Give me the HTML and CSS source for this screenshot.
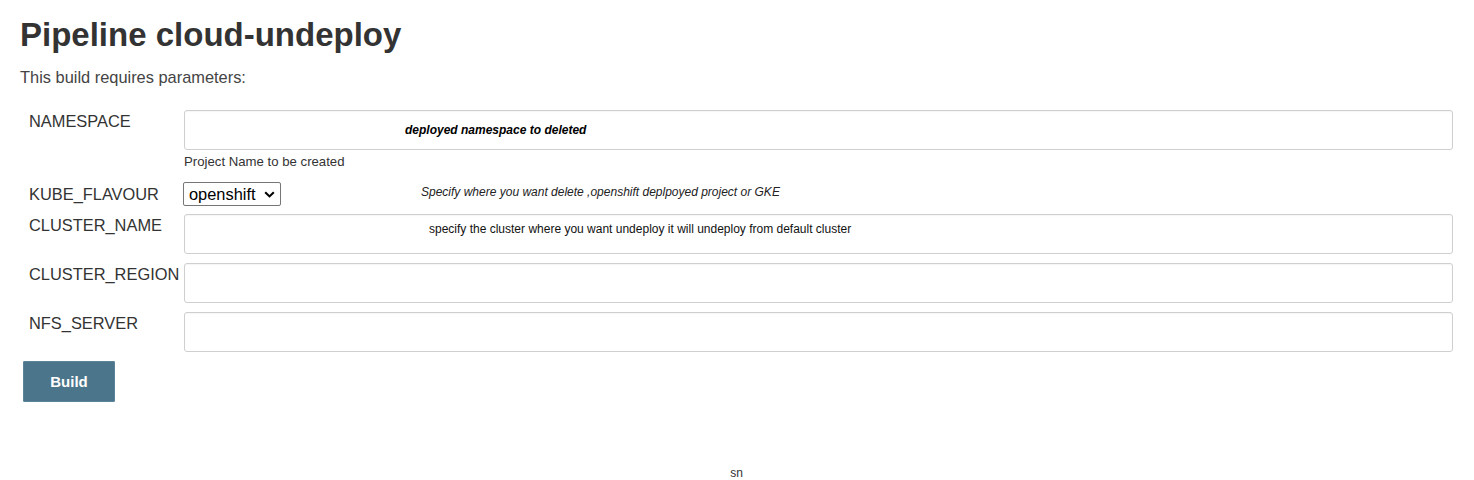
FILE: index.html
```html
<!DOCTYPE html>
<html lang="en">
<head>
<meta charset="utf-8">
<title>Pipeline cloud-undeploy</title>
<link rel="stylesheet" href="styles.css">
</head>
<body>
<div class="page">
  <h1 class="title">Pipeline cloud-undeploy</h1>
  <p class="intro">This build requires parameters:</p>
  <form class="params">
    <div class="row">
      <div class="label">NAMESPACE</div>
      <div class="field">
        <div class="input-wrap">
          <input class="text-input" type="text">
          <span class="overlay overlay-ns">deployed namespace to deleted</span>
        </div>
        <div class="desc">Project Name to be created</div>
      </div>
    </div>
    <div class="row row-kube">
      <div class="label label-kube">KUBE_FLAVOUR</div>
      <div class="field field-kube">
        <span class="select-wrap">
          <select class="select"><option>openshift</option><option>GKE</option></select>
          <svg class="chevron" width="11" height="7" viewBox="0 0 11 7" aria-hidden="true"><path d="M1.2 1.2 L5.5 5.4 L9.8 1.2" fill="none" stroke="#000" stroke-width="2.1"/></svg>
        </span>
        <span class="kube-desc">Specify where you want delete ,openshift deplpoyed project or GKE</span>
      </div>
    </div>
    <div class="row row-gap">
      <div class="label">CLUSTER_NAME</div>
      <div class="field">
        <div class="input-wrap">
          <input class="text-input" type="text">
          <span class="overlay overlay-cluster">specify the cluster where you want undeploy it will undeploy from default cluster</span>
        </div>
      </div>
    </div>
    <div class="row row-gap">
      <div class="label">CLUSTER_REGION</div>
      <div class="field">
        <div class="input-wrap"><input class="text-input" type="text"></div>
      </div>
    </div>
    <div class="row row-gap">
      <div class="label">NFS_SERVER</div>
      <div class="field">
        <div class="input-wrap"><input class="text-input" type="text"></div>
      </div>
    </div>
  </form>
  <div class="actions"><button class="build-btn" type="button">Build</button></div>
  <footer class="footer">sn</footer>
</div>
</body>
</html>
```
FILE: styles.css
```css
html, body {
  margin: 0;
  padding: 0;
  background: #fff;
}
body {
  font-family: "Liberation Sans", Arial, sans-serif;
  color: #333;
}
.page {
  padding: 15px 21px 0 20px;
}
.title {
  margin: 0;
  font-size: 33px;
  line-height: 40px;
  font-weight: bold;
  color: #333;
}
.intro {
  margin: 12px 0 0;
  font-size: 16.4px;
  line-height: 20px;
  color: #444;
}
.params {
  margin: 23px 0 0;
  padding-left: 9px;
  display: flex;
  flex-direction: column;
}
.row {
  display: grid;
  grid-template-columns: 155px 1fr;
  align-items: start;
}
.row-gap {
  margin-top: 9px;
}
.row-kube {
  margin-top: 12px;
  margin-bottom: -1px;
}
.label {
  font-size: 16.4px;
  line-height: 20px;
  padding-top: 1px;
  color: #333;
  white-space: nowrap;
}
.label-kube {
  padding-top: 2px;
}
.field {
  min-width: 0;
}
.input-wrap {
  position: relative;
}
.text-input {
  display: block;
  width: 100%;
  height: 40px;
  box-sizing: border-box;
  border: 1px solid #cfcfcf;
  border-radius: 3px;
  background: #fff;
  box-shadow: inset 0 1px 1px rgba(0, 0, 0, 0.04);
  padding: 0 8px;
  margin: 0;
  font: 16px "Liberation Sans", Arial, sans-serif;
}
.overlay {
  position: absolute;
  font-size: 12px;
  line-height: 14px;
  color: #000;
  white-space: nowrap;
  pointer-events: none;
}
.overlay-ns {
  left: 221px;
  top: 13px;
  font-weight: bold;
  font-style: italic;
}
.overlay-cluster {
  left: 245px;
  top: 8px;
  color: #111;
}
.desc {
  margin-top: 4px;
  font-size: 13.2px;
  line-height: 16px;
  color: #333;
}
.field-kube {
  display: flex;
  align-items: flex-start;
}
.select-wrap {
  position: relative;
  display: block;
  margin-left: -1px;
}
.select {
  display: block;
  width: 98px;
  height: 24px;
  box-sizing: border-box;
  margin: 0;
  padding: 0 0 0 5px;
  font: 16.4px "Liberation Sans", Arial, sans-serif;
  color: #000;
  background: #fff;
  border: 1px solid #767676;
  border-radius: 2px;
  -webkit-appearance: none;
  appearance: none;
}
.chevron {
  position: absolute;
  right: 6px;
  top: 9px;
  pointer-events: none;
}
.kube-desc {
  margin-left: 140px;
  margin-top: 3px;
  font-size: 12px;
  line-height: 14px;
  font-style: italic;
  color: #222;
}
.actions {
  margin-top: 9px;
  padding-left: 3px;
}
.build-btn {
  display: block;
  width: 92px;
  height: 41px;
  margin: 0;
  padding: 0;
  border: 1px solid #5b8499;
  border-radius: 1px;
  background: #4b758b;
  color: #fff;
  font: bold 15px "Liberation Sans", Arial, sans-serif;
}
.footer {
  margin-top: 64px;
  text-align: center;
  font-size: 12px;
  line-height: 14px;
  color: #333;
}
```
